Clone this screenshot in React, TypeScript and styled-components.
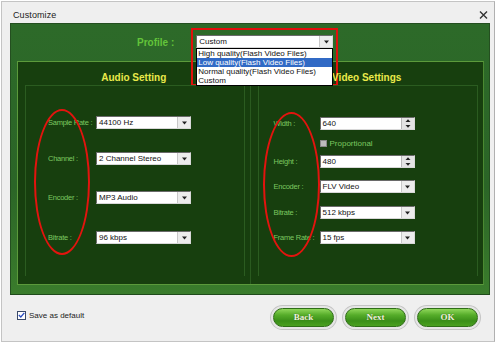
import React from 'react';
import styled, { createGlobalStyle } from 'styled-components';

const Global = createGlobalStyle`
  html,body{margin:0;padding:0;background:#fff;}
  body{font-family:"Liberation Sans",Arial,sans-serif;}
  #root{width:500px;height:343px;}
`;

/* ── window chrome ── */
const Window = styled.div`
  width:492px;height:339px;margin:1px 0 0 1px;
  background:#efefef;border:1px solid #c4c4c4;border-right-color:#b0b0b0;
  display:flex;flex-direction:column;position:relative;
`;
const TitleBar = styled.div`
  height:21px;display:flex;align-items:center;justify-content:space-between;
  padding:0 6px 0 11px;
`;
const Title = styled.div`font-size:9px;color:#222;letter-spacing:.1px;margin-top:5px;`;
const CloseBtn = styled.div`display:flex;margin-top:4px;`;

/* ── green body ── */
const GreenFrame = styled.div`
  margin:0 4px 0 8px;height:270px;
  background:linear-gradient(180deg,#2d6a29 0%,#2b6527 60%,#3a7c2c 100%);
  border:1px solid #244f20;border-bottom-color:#1f4a1b;
  display:flex;flex-direction:column;
`;
const ProfileRow = styled.div`
  height:37px;display:flex;align-items:center;padding-left:126px;gap:22px;
`;
const ProfileLabel = styled.div`font-size:10px;font-weight:700;color:#63c43a;`;
const ProfileWrap = styled.div`position:relative;margin-top:-2px;`;
const RedBox = styled.div`
  position:absolute;left:-5px;top:-7px;width:143px;height:54px;
  border:2px solid #e0100c;pointer-events:none;
`;
const DropList = styled.div`
  position:absolute;left:0;top:13px;width:135px;background:#fff;
  border:1px solid #000;z-index:2;
`;
const DropItem = styled.div<{ $sel?: boolean }>`
  font-size:8px;line-height:9px;height:9px;padding-left:1px;white-space:nowrap;
  background:${p => (p.$sel ? '#316ac5' : '#fff')};
  color:${p => (p.$sel ? '#fff' : '#111')};
`;

const PanelsArea = styled.div`
  flex:1;margin:0 5px 9px 6px;background:#173f0e;
  border:1px solid #5b9a3b;border-right-color:#4b8a31;
  display:grid;grid-template-columns:1fr 1fr;
`;
const Panel = styled.div<{ $left?: boolean }>`
  position:relative;display:flex;flex-direction:column;
  border-right:${p => (p.$left ? '1px solid #2a5a1f' : 'none')};
`;
const PanelTitle = styled.div`
  height:23px;display:flex;align-items:flex-end;justify-content:center;
  font-size:10px;font-weight:700;color:#eaea4a;padding-bottom:2px;box-sizing:border-box;
`;
const InnerFrame = styled.div<{ $pl: number }>`
  flex:1;margin:0 5px 8px 7px;border:1px solid #2b5c20;border-bottom:none;
  padding-left:${p => p.$pl}px;
`;
const Row = styled.div<{ $mt: number }>`
  display:flex;align-items:center;height:13px;margin-top:${p => p.$mt}px;
`;
const Label = styled.div<{ $w: number }>`
  width:${p => p.$w}px;flex:none;font-size:7.5px;letter-spacing:-.25px;
  color:#7cc860;white-space:nowrap;
`;

const Select = styled.div<{ $w: number }>`
  width:${p => p.$w}px;height:13px;box-sizing:border-box;background:#fff;flex:none;
  border:1px solid #6a6a6a;border-right-color:#d8d8d8;border-bottom-color:#d8d8d8;
  display:flex;align-items:center;
`;
const SelText = styled.div`flex:1;font-size:8px;color:#111;padding-left:2px;white-space:nowrap;`;
const ArrowBtn = styled.div`
  width:12px;height:11px;background:#ececec;border-left:1px solid #c8c8c8;
  display:flex;align-items:center;justify-content:center;
`;
const Spin = styled.div`
  width:12px;height:11px;background:#e4e4e4;border-left:1px solid #b8b8b8;
  display:flex;flex-direction:column;align-items:center;justify-content:space-around;
`;

const CheckRow = styled.div<{ $pl: number }>`
  display:flex;align-items:center;gap:3px;height:8px;margin-top:9px;padding-left:${p => p.$pl}px;
`;
const Check = styled.div<{ $dark?: boolean }>`
  width:7px;height:7px;box-sizing:border-box;
  background:${p => (p.$dark ? '#bcbcbc' : '#fff')};
  border:1px solid ${p => (p.$dark ? '#8a8a8a' : '#4a5a7a')};
  display:flex;align-items:center;justify-content:center;
`;
const CheckText = styled.div<{ $green?: boolean }>`
  font-size:8px;color:${p => (p.$green ? '#7cc860' : '#222')};
`;

const Oval = styled.div<{ $l: number; $t: number; $w: number; $h: number }>`
  position:absolute;left:${p => p.$l}px;top:${p => p.$t}px;
  width:${p => p.$w}px;height:${p => p.$h}px;box-sizing:border-box;
  border:2px solid #e3140e;border-radius:50%;pointer-events:none;
`;

/* ── footer ── */
const Footer = styled.div`
  flex:1;display:flex;align-items:center;justify-content:space-between;
  padding:0 16px 2px 15px;
`;
const SaveRow = styled.div`display:flex;align-items:center;gap:3px;margin-top:-4px;`;
const BigCheck = styled.div`
  width:9px;height:9px;box-sizing:border-box;background:#fff;border:1px solid #3a4a6a;
  display:flex;align-items:center;justify-content:center;
`;
const Buttons = styled.div`display:flex;gap:11px;`;
const PillBtn = styled.div`
  width:61px;height:19px;box-sizing:border-box;border-radius:10px;
  background:linear-gradient(180deg,#8fd75a 0%,#56ad2a 35%,#3a8f18 70%,#4aa120 100%);
  border:1px solid #2f6e17;
  box-shadow:0 0 0 2px #e6e6e6,0 0 0 3px #c4c4c4;
  display:flex;align-items:center;justify-content:center;
  font-family:"Liberation Serif",serif;font-size:9px;font-weight:700;color:#f0f2dc;
  text-shadow:0 0 1px #2a5a12;
`;

const DownArrow = () => (
  <svg width="7" height="4" viewBox="0 0 7 4"><path d="M1 0.5h5L3.5 3.5z" fill="#222" /></svg>
);
const SpinArrows = () => (
  <Spin>
    <svg width="6" height="3" viewBox="0 0 6 3"><path d="M0.5 3L3 0.3 5.5 3z" fill="#222" /></svg>
    <svg width="6" height="3" viewBox="0 0 6 3"><path d="M0.5 0L3 2.7 5.5 0z" fill="#222" /></svg>
  </Spin>
);

const Combo: React.FC<{ w: number; value: string; spin?: boolean }> = ({ w, value, spin }) => (
  <Select $w={w}>
    <SelText>{value}</SelText>
    {spin ? <SpinArrows /> : <ArrowBtn><DownArrow /></ArrowBtn>}
  </Select>
);

const audioRows = [
  { label: 'Sample Rate :', value: '44100 Hz', mt: 30 },
  { label: 'Channel :', value: '2 Channel Stereo', mt: 23 },
  { label: 'Encoder :', value: 'MP3 Audio', mt: 26 },
  { label: 'Bitrate :', value: '96 kbps', mt: 27 },
];

const App: React.FC = () => (
  <>
    <Global />
    <Window>
      <TitleBar>
        <Title>Customize</Title>
        <CloseBtn>
          <svg width="9" height="8" viewBox="0 0 9 8">
            <path d="M1 0.5l7 7M8 0.5l-7 7" stroke="#333" strokeWidth="1.4" />
          </svg>
        </CloseBtn>
      </TitleBar>

      <GreenFrame>
        <ProfileRow>
          <ProfileLabel>Profile :</ProfileLabel>
          <ProfileWrap>
            <Combo w={137} value="Custom" />
            <DropList>
              <DropItem>High quality(Flash Video Files)</DropItem>
              <DropItem $sel>Low quality(Flash Video Files)</DropItem>
              <DropItem>Normal quality(Flash Video Files)</DropItem>
              <DropItem>Custom</DropItem>
            </DropList>
            <RedBox />
          </ProfileWrap>
        </ProfileRow>

        <PanelsArea>
          <Panel $left>
            <PanelTitle>Audio Setting</PanelTitle>
            <InnerFrame $pl={22}>
              {audioRows.map(r => (
                <Row key={r.label} $mt={r.mt}>
                  <Label $w={48}>{r.label}</Label>
                  <Combo w={95} value={r.value} />
                </Row>
              ))}
            </InnerFrame>
            <Oval $l={16} $t={47} $w={56} $h={146} />
          </Panel>

          <Panel>
            <PanelTitle>Video Settings</PanelTitle>
            <InnerFrame $pl={15}>
              <Row $mt={31}>
                <Label $w={46}>Width :</Label>
                <Combo w={95} value="640" spin />
              </Row>
              <CheckRow $pl={46}>
                <Check $dark />
                <CheckText $green>Proportional</CheckText>
              </CheckRow>
              <Row $mt={8}>
                <Label $w={46}>Height :</Label>
                <Combo w={95} value="480" spin />
              </Row>
              <Row $mt={12}>
                <Label $w={46}>Encoder :</Label>
                <Combo w={95} value="FLV Video" />
              </Row>
              <Row $mt={13}>
                <Label $w={46}>Bitrate :</Label>
                <Combo w={95} value="512 kbps" />
              </Row>
              <Row $mt={12}>
                <Label $w={46}>Frame Rate :</Label>
                <Combo w={95} value="15 fps" />
              </Row>
            </InnerFrame>
            <Oval $l={12} $t={50} $w={57} $h={145} />
          </Panel>
        </PanelsArea>
      </GreenFrame>

      <Footer>
        <SaveRow>
          <BigCheck>
            <svg width="7" height="6" viewBox="0 0 7 6">
              <path d="M0.8 3l2 2L6.3 0.8" stroke="#2a4cc0" strokeWidth="1.3" fill="none" />
            </svg>
          </BigCheck>
          <CheckText>Save as default</CheckText>
        </SaveRow>
        <Buttons>
          <PillBtn>Back</PillBtn>
          <PillBtn>Next</PillBtn>
          <PillBtn>OK</PillBtn>
        </Buttons>
      </Footer>
    </Window>
  </>
);

export default App;
